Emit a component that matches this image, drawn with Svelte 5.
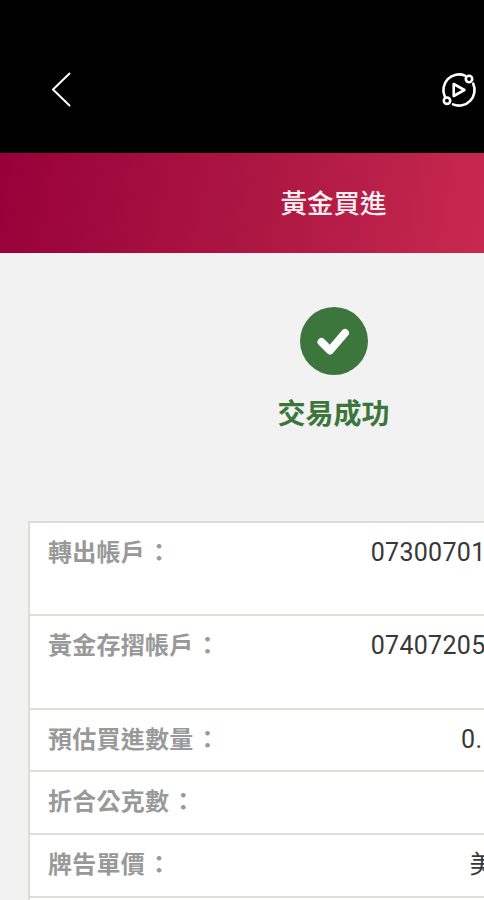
<script>
  const rows = [
    { label: '轉出帳戶', value: '073007012345678901', tall: true },
    { label: '黃金存摺帳戶', value: '074072051234567890', tall: true },
    { label: '預估買進數量', value: '0.50000 (台錢)' },
    { label: '折合公克數', value: '1.875 公克' },
    { label: '牌告單價', value: '美元/2,000.00' },
    { label: '', value: '' }
  ];
</script>

<div class="page" lang="zh-TW">
  <div class="topbar">
    <svg class="back" width="20" height="35" viewBox="0 0 20 35" fill="none">
      <path d="M18.5 1.5 L2 17.5 L18.5 33.5" stroke="#fff" stroke-width="2" stroke-linecap="round" stroke-linejoin="round" />
    </svg>
    <svg class="replay" width="40" height="40" viewBox="0 0 40 40" fill="none" stroke="#fff" stroke-width="2.6" stroke-linecap="round" stroke-linejoin="round">
      <path d="M27 5.6 A15.6 15.6 0 0 0 6.8 26.5" />
      <path d="M15 34.4 A15.6 15.6 0 0 0 35.2 13.6" />
      <circle cx="31" cy="9" r="3.2" />
      <circle cx="9" cy="30.7" r="3.2" />
      <path d="M15.7 14 V26 L26.4 20 Z" />
    </svg>
  </div>

  <header class="title"><span>黃金買進</span></header>

  <section class="result">
    <svg width="68" height="68" viewBox="0 0 68 68">
      <circle cx="34" cy="34" r="34" fill="#3c763d" />
      <path d="M21.5 35 L30 43.5 L45 26" fill="none" stroke="#fff" stroke-width="8" stroke-linecap="round" stroke-linejoin="round" />
    </svg>
    <h1>交易成功</h1>
  </section>

  <div class="table">
    {#each rows as row}
      <div class="row" class:tall={row.tall}>
        <span class="label">{row.label}{#if row.label}<span class="colon">：</span>{/if}</span>
        <span class="value">{row.value}</span>
      </div>
    {/each}
  </div>
</div>

<style>
  :global(html), :global(body) {
    overflow: hidden;
    background: #f2f2f2;
  }

  .page {
    width: 667px;
    height: 900px;
    overflow: hidden;
    background: #f2f2f2;
    font-family: Roboto, "Noto Sans CJK TC", sans-serif;
  }

  .topbar {
    box-sizing: border-box;
    height: 153px;
    background: #000;
    padding: 70px 0 0 51px;
    display: flex;
    align-items: flex-start;
  }

  .back {
    margin-top: 2px;
  }

  .replay {
    margin-left: 367px;
  }

  .title {
    box-sizing: border-box;
    height: 100px;
    padding-bottom: 4px;
    display: flex;
    align-items: center;
    justify-content: center;
    color: #fbeef1;
    font-size: 26.5px;
    font-weight: 500;
    background: linear-gradient(100deg, #98003a 0%, #b01a44 45%, #c8284f 72%, #c8284f 100%);
  }

  .result {
    padding-top: 54px;
    height: 268px;
    box-sizing: border-box;
    display: flex;
    flex-direction: column;
    align-items: center;
  }

  h1 {
    margin: 20px 0 0;
    font-size: 28px;
    line-height: 40px;
    font-weight: 700;
    color: #3c763d;
  }

  .table {
    margin: 0 28px;
    background: #fff;
    border-left: 2px solid #ddddd3;
    border-top: 2px solid #ddddd3;
  }

  .row {
    box-sizing: border-box;
    height: 62.7px;
    padding: 14px 10px 0 18px;
    border-bottom: 2px solid #ddddd3;
    display: flex;
    justify-content: space-between;
    font-size: 24px;
    line-height: 32px;
  }

  .row.tall {
    height: 93.3px;
  }

  .label {
    color: #999;
    font-weight: 700;
    letter-spacing: 0.25px;
  }

  .colon {
    margin-left: 2px;
  }

  .value {
    color: #383838;
    font-size: 25px;
    letter-spacing: 0.3px;
    white-space: nowrap;
  }
</style>
